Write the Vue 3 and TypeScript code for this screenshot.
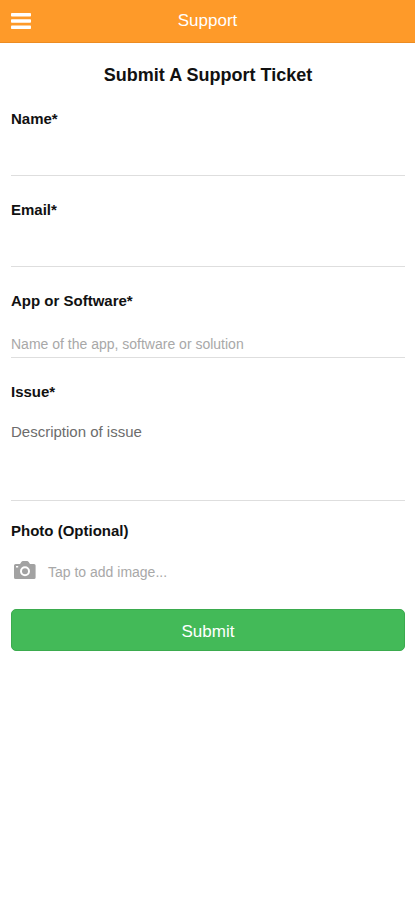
<script setup lang="ts">
import { computed, reactive, ref } from 'vue'

interface TextField {
  id: 'name' | 'email' | 'app'
  label: string
  type: string
  placeholder: string
}

const fields: TextField[] = [
  { id: 'name', label: 'Name*', type: 'text', placeholder: '' },
  { id: 'email', label: 'Email*', type: 'email', placeholder: '' },
  { id: 'app', label: 'App or Software*', type: 'text', placeholder: 'Name of the app, software or solution' },
]

const form = reactive({ name: '', email: '', app: '', issue: '' })
const photo = ref<File | null>(null)
const photoText = computed(() => photo.value?.name ?? 'Tap to add image...')

function pickPhoto(event: Event) {
  photo.value = (event.target as HTMLInputElement).files?.[0] ?? null
}
</script>

<template>
  <div class="page">
    <header class="bar">
      <button class="menu" type="button" aria-label="Menu">
        <svg width="20" height="18" viewBox="0 0 20 18" aria-hidden="true">
          <rect y="1" width="20" height="3.6" rx="0.8" />
          <rect y="7.2" width="20" height="3.6" rx="0.8" />
          <rect y="13.4" width="20" height="3.6" rx="0.8" />
        </svg>
      </button>
      <h1 class="bar-title">Support</h1>
    </header>

    <form class="form" @submit.prevent>
      <h2 class="title">Submit A Support Ticket</h2>

      <div v-for="field in fields" :key="field.id" class="field">
        <label class="label" :for="field.id">{{ field.label }}</label>
        <input
          :id="field.id"
          v-model="form[field.id]"
          class="input"
          :type="field.type"
          :placeholder="field.placeholder"
        />
      </div>

      <div class="field issue-field">
        <label class="label" for="issue">Issue*</label>
        <textarea id="issue" v-model="form.issue" class="input area" placeholder="Description of issue"></textarea>
      </div>

      <div class="field photo-field">
        <label class="label" for="photo">Photo (Optional)</label>
        <label class="picker" for="photo">
          <svg width="22" height="22" viewBox="0 0 22 22" aria-hidden="true">
            <path
              fill-rule="evenodd"
              d="M1.6 3H6L7.3 1Q8 0 9 0H13Q14 0 14.7 1L16 3H20Q21.6 3 21.6 4.6V16.4Q21.6 18 20 18H1.6Q0 18 0 16.4V4.6Q0 3 1.6 3ZM11 5.2A5 5 0 1 0 11 15.2A5 5 0 1 0 11 5.2ZM2 5V6.6H4.2V5Z"
            />
            <circle cx="11" cy="10.2" r="3" />
          </svg>
          <span>{{ photoText }}</span>
        </label>
        <input id="photo" class="file" type="file" accept="image/*" @change="pickPhoto" />
      </div>

      <button class="submit" type="submit">Submit</button>
    </form>
  </div>
</template>

<style>
body {
  background: #fff;
}
</style>

<style scoped>
.page {
  font-family: "Liberation Sans", Arial, sans-serif;
  color: #111;
}

.bar {
  display: grid;
  grid-template-columns: 42px 1fr 42px;
  align-items: center;
  height: 43px;
  box-sizing: border-box;
  background: #fe9a29;
  border-bottom: 1px solid #ec8c22;
}

.menu {
  display: flex;
  align-items: center;
  height: 42px;
  padding: 0 0 0 11px;
  border: 0;
  background: none;
}

.menu svg {
  fill: #fff;
}

.bar-title {
  margin: 0;
  font-size: 17px;
  font-weight: 400;
  line-height: 40px;
  text-align: center;
  color: #fff;
}

.form {
  padding: 20px 10px 20px 11px;
}

.title {
  margin: 0 0 22px;
  font-size: 18px;
  line-height: 24px;
  text-align: center;
}

.field {
  display: flex;
  flex-direction: column;
  margin-bottom: 24px;
}

.label {
  font-size: 15px;
  font-weight: 700;
  line-height: 20px;
}

.input {
  width: 100%;
  height: 47px;
  box-sizing: border-box;
  margin: 0;
  padding: 20px 0 0;
  border: 0;
  border-bottom: 1px solid #dedede;
  border-radius: 0;
  outline: 0;
  background: none;
  font-family: inherit;
  font-size: 14px;
  color: #333;
}

.input::placeholder {
  color: #a8a8a8;
  opacity: 1;
}

.area {
  height: 99px;
  font-size: 15px;
  line-height: 20px;
  resize: none;
}

.area::placeholder {
  color: #6c6c6c;
}

.issue-field {
  margin-bottom: 20px;
}

.photo-field {
  position: relative;
  margin-bottom: 20px;
}

.picker {
  display: flex;
  align-items: center;
  gap: 12px;
  margin-top: 14px;
  padding-left: 3px;
  font-size: 14px;
  font-weight: 400;
  line-height: 34px;
  color: #a8a8a8;
}

.picker svg {
  fill: #a2a2a2;
}

.file {
  position: absolute;
  width: 1px;
  height: 1px;
  opacity: 0;
}

.submit {
  display: block;
  width: 100%;
  height: 42px;
  padding: 4px 0 0;
  border: 1px solid #3bab4e;
  border-radius: 5px;
  background: #43ba58;
  font-family: inherit;
  font-size: 17px;
  color: #fff;
}
</style>
